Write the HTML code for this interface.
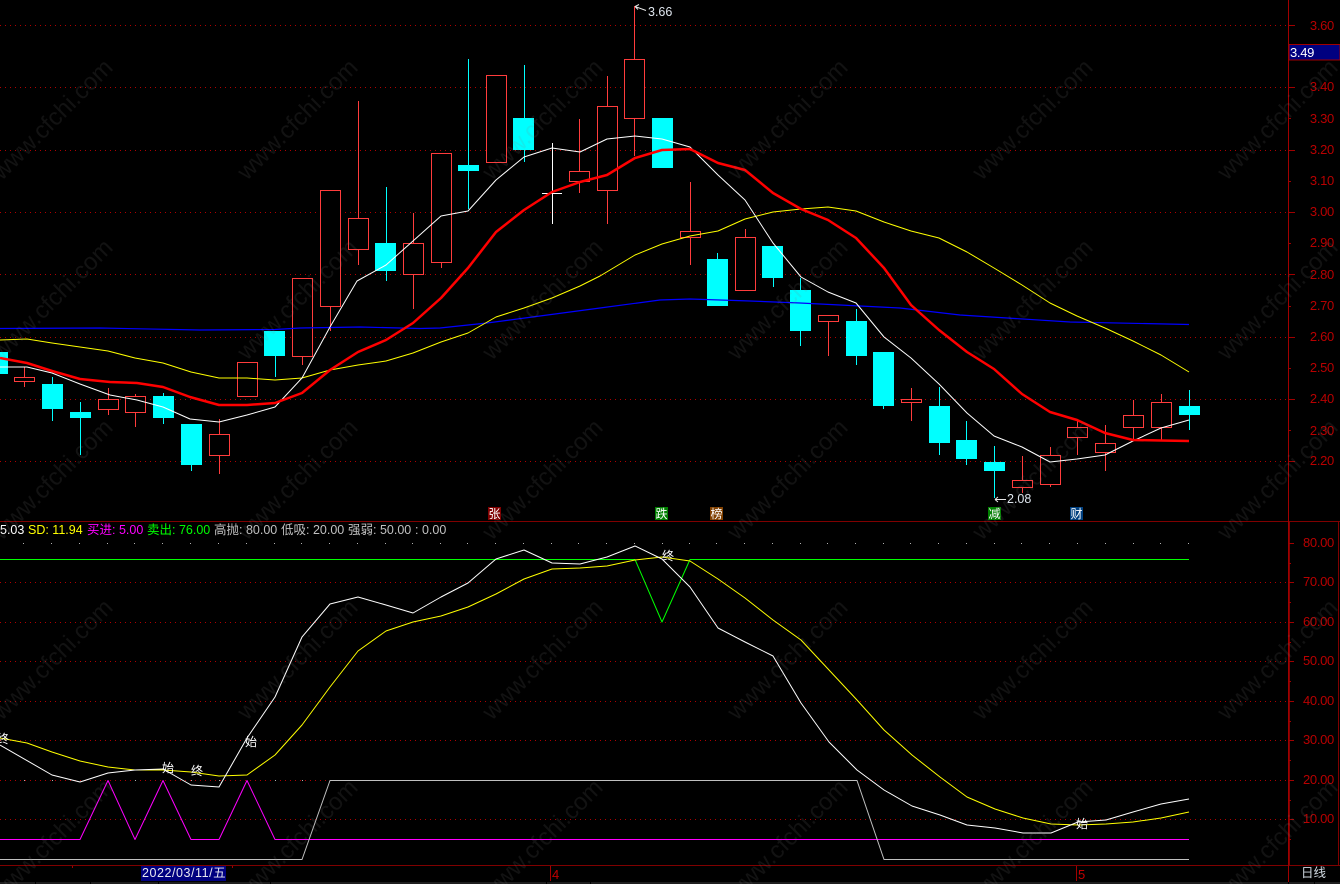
<!DOCTYPE html>
<html><head><meta charset="utf-8"><title>K线</title>
<style>
html,body{margin:0;padding:0;background:#000;width:1340px;height:884px;overflow:hidden}
svg{display:block;position:absolute;left:0;top:0}
text{font-family:"Liberation Sans","Noto Sans CJK SC",sans-serif}
.ax{font-size:13px;fill:#b80000;text-anchor:end;letter-spacing:-.3px}
.h{font-size:12.5px}
.mk{font-size:12px;fill:#fff;text-anchor:middle}
.an{font-size:12.5px;fill:#dfe6ee}
.wm{font-size:24px;fill:#808080;fill-opacity:.14;text-anchor:middle}
.c{shape-rendering:crispEdges}
</style></head><body>
<svg width="1340" height="884" viewBox="0 0 1340 884" xmlns="http://www.w3.org/2000/svg">
<rect width="1340" height="884" fill="#000"/>
<!-- grid -->
<path class="c" fill="none" stroke="#b00000" stroke-dasharray="1 4" d="M0 25.5H1288M0 87.5H1288M0 150.5H1288M0 212.5H1288M0 274.5H1288M0 337.5H1288M0 399.5H1288M0 461.5H1288M0 582.5H1288M0 622.5H1288M0 661.5H1288M0 701.5H1288M0 740.5H1288M0 780.5H1288M0 819.5H1288"/>
<path class="c" fill="none" stroke="#b0b0b0" d="M23 543.5h1M51 543.5h1M79 543.5h1M107 543.5h1M134 543.5h1M162 543.5h1M190 543.5h1M218 543.5h1M246 543.5h1M274 543.5h1M301 543.5h1M329 543.5h1M357 543.5h1M385 543.5h1M412 543.5h1M440 543.5h1M467 543.5h1M495 543.5h1M523 543.5h1M551 543.5h1M578 543.5h1M606 543.5h1M634 543.5h1M662 543.5h1M689 543.5h1M716 543.5h1M744 543.5h1M772 543.5h1M800 543.5h1M827 543.5h1M855 543.5h1M883 543.5h1M910 543.5h1M938 543.5h1M966 543.5h1M994 543.5h1M1021 543.5h1M1049 543.5h1M1077 543.5h1M1105 543.5h1M1133 543.5h1M1160 543.5h1M1188 543.5h1M24 780.5h1M52 780.5h1M135 780.5h1M191 780.5h1M219 780.5h1M275 780.5h1M302 780.5h1"/>

<!-- wicks -->
<path class="c" fill="none" stroke="#00ffff" d="M-3 345V380M52.5 377V421M80.5 402V455M163.5 393V424M191.5 424V471M275.5 331V377M386.5 187V281M468.5 59V209M524.5 65V162M717.5 253V306M773.5 246V287M800.5 278V346M856.5 309V365M883.5 352V409M939.5 387V455M966.5 421V465M994.5 446V498M1189.5 390V430"/>
<path class="c" fill="none" stroke="#ff3c3c" d="M24.5 367V387M108.5 388V415M135.5 394V427M219.5 419V474M302.5 278V365M330.5 190V331M358.5 101V265M413.5 213V309M441.5 153V268M579.5 119V193M607.5 76V224M634.5 6V156M690.5 182V265M745.5 229V290M828.5 316V356M911.5 388V421M1022.5 456V493M1050.5 447V487M1077.5 419V455M1105.5 425V471M1133.5 400V440M1161.5 394V440"/>
<path class="c" fill="none" stroke="#fff" d="M552.5 143V224M542 193.5H562"/>

<!-- cyan bodies -->
<g class="c" fill="#00ffff">
<rect x="-13" y="352" width="21" height="22"/>
<rect x="42" y="384" width="21" height="25"/>
<rect x="70" y="412" width="21" height="6"/>
<rect x="153" y="396" width="21" height="22"/>
<rect x="181" y="424" width="21" height="41"/>
<rect x="264" y="331" width="21" height="25"/>
<rect x="375" y="243" width="21" height="28"/>
<rect x="458" y="165" width="21" height="6"/>
<rect x="513" y="118" width="21" height="32"/>
<rect x="652" y="118" width="21" height="50"/>
<rect x="707" y="259" width="21" height="47"/>
<rect x="762" y="246" width="21" height="32"/>
<rect x="790" y="290" width="21" height="41"/>
<rect x="846" y="321" width="21" height="35"/>
<rect x="873" y="352" width="21" height="54"/>
<rect x="929" y="406" width="21" height="37"/>
<rect x="956" y="440" width="21" height="19"/>
<rect x="984" y="462" width="21" height="9"/>
<rect x="1179" y="406" width="21" height="9"/>
</g>
<!-- red bodies -->
<g class="c" fill="#000" stroke="#ff3c3c">
<rect x="14.5" y="377.5" width="20" height="4"/>
<rect x="98.5" y="399.5" width="20" height="10"/>
<rect x="125.5" y="396.5" width="20" height="16"/>
<rect x="209.5" y="434.5" width="20" height="21"/>
<rect x="237.5" y="362.5" width="20" height="34"/>
<rect x="292.5" y="278.5" width="20" height="78"/>
<rect x="320.5" y="190.5" width="20" height="116"/>
<rect x="348.5" y="218.5" width="20" height="31"/>
<rect x="403.5" y="243.5" width="20" height="31"/>
<rect x="431.5" y="153.5" width="20" height="109"/>
<rect x="486.5" y="75.5" width="20" height="87"/>
<rect x="569.5" y="171.5" width="20" height="10"/>
<rect x="597.5" y="106.5" width="20" height="84"/>
<rect x="624.5" y="59.5" width="20" height="59"/>
<rect x="680.5" y="231.5" width="20" height="6"/>
<rect x="735.5" y="237.5" width="20" height="53"/>
<rect x="818.5" y="315.5" width="20" height="6"/>
<rect x="901.5" y="399.5" width="20" height="3"/>
<rect x="1012.5" y="480.5" width="20" height="7"/>
<rect x="1040.5" y="455.5" width="20" height="29"/>
<rect x="1067.5" y="427.5" width="20" height="10"/>
<rect x="1095.5" y="443.5" width="20" height="9"/>
<rect x="1123.5" y="415.5" width="20" height="12"/>
<rect x="1151.5" y="402.5" width="20" height="25"/>
</g>

<!-- MA lines -->
<g fill="none" stroke-linejoin="round">
<polyline stroke="#0000ff" stroke-width="1.2" points="0,328.5 100,328 200,330 275,329.5 300,328 360,327 420,328.5 440,328 487,323 540,316 600,308 660,300 690,299 750,301 800,303 860,306 900,308 960,315 1070,322 1189,324.5"/>
<polyline stroke="#ffff00" stroke-width="1" points="0,340 27,339 52,343 80,347 108,351 135,358 163,363 191,372 219,378 247,378 275,380 302,378 330,370 358,365 386,361 413,353 441,342 468,333 496,317 524,308 552,298 580,286 600,276 635,255 662,244 690,236 718,231 745,219 773,212 801,209 828,207 856,211 884,222 911,231 939,238 967,252 994,268 1022,285 1050,303 1077,316 1105,328 1133,341 1161,355 1189,372"/>
<polyline stroke="#ffffff" stroke-width="1" points="0,367 27,367 52,373 80,384 110,395 137,400 163,407 190,419 219,422 247,415 275,407 302,378 330,327 357,281 386,265 413,241 441,216 468,211 496,180 524,157 552,148 580,152 607,139 635,136 662,139 690,147 718,175 745,200 773,243 801,277 828,292 856,303 884,337 911,358 939,384 967,413 994,436 1022,447 1050,462 1077,459 1105,455 1133,441 1161,428 1189,420"/>
<polyline stroke="#ff0000" stroke-width="2.5" points="0,358 27,363 52,371 80,379 110,382 137,383 163,387 190,397 219,405 247,405 275,403 302,393 330,370 358,352 386,340 413,323 441,298 468,268 496,232 524,210 552,192 580,182 607,175 635,158 662,150 690,149 718,163 745,170 773,193 801,209 828,220 856,238 884,268 911,305 939,330 967,352 994,369 1022,394 1050,412 1077,420 1105,433 1133,440 1161,440.5 1189,441"/>
</g>

<!-- lower indicators -->
<g fill="none" stroke-width="1" stroke-linejoin="round">
<polyline stroke="#00ff00" points="0,559.5 635,559.5 662,622 690,559.5 1189,559.5"/>
<polyline stroke="#ff00ff" points="0,839.5 80,839.5 108,780.5 135,839.5 163,780.5 191,839.5 219,839.5 247,780.5 275,839.5 1189,839.5"/>
<polyline stroke="#c0c0c0" points="0,859.5 302,859.5 330,780.5 857,780.5 884,859.5 1189,859.5"/>
<polyline stroke="#ffff00" points="0,738 27,743 52,752 80,761 108,767 135,770 163,770 191,772 219,776 247,775 275,755 302,725 330,687 358,651 386,631 413,622 441,616 468,607 496,594 524,579 552,569 580,568 607,566 635,560 662,557 690,561 718,579 745,598 773,620 801,640 829,670 857,700 884,730 912,755 940,777 967,797 995,809 1023,818 1051,824 1078,825 1106,824 1133,822 1161,818 1189,812"/>
<polyline stroke="#ffffff" points="0,745 52,775 80,782 108,773 135,770 163,769 191,785 219,787 247,738 275,697 302,637 330,604 358,597 386,605 413,613 441,597 468,583 496,559 524,550 552,563 580,564 607,557 635,546 662,559 690,587 718,628 745,642 773,656 801,703 829,742 857,770 884,790 912,806 940,815 967,825 995,828 1023,833 1051,833 1078,822 1106,820 1133,812 1161,804 1189,799"/>
</g>

<!-- axis frames -->
<g class="c" fill="none" stroke="#800000">
<path d="M0 521.5H1340M0 865.5H1340"/>
<path d="M1288.5 0V884" stroke="#a00000"/>
<path d="M1289.5 521V865M1338.5 521V865"/>
<path stroke="#a00000" d="M1288 25.5h7M1288 87.5h7M1288 150.5h7M1288 212.5h7M1288 274.5h7M1288 337.5h7M1288 399.5h7M1288 461.5h7M1288 118.5h3M1288 181.5h3M1288 243.5h3M1288 306.5h3M1288 368.5h3M1288 430.5h3M1288 543.5h6M1288 582.5h6M1288 622.5h6M1288 661.5h6M1288 701.5h6M1288 740.5h6M1288 780.5h6M1288 819.5h6M1288 563.5h3M1288 602.5h3M1288 642.5h3M1288 681.5h3M1288 721.5h3M1288 760.5h3M1288 800.5h3M1288 839.5h3"/>
<path stroke="#a00000" d="M72.5 866v2M232.5 866v2M550.5 866v15M1076.5 866v15"/>
</g>

<!-- right axis labels -->
<g>
<text class="ax" x="1334" y="30">3.60</text>
<text class="ax" x="1334" y="91">3.40</text>
<text class="ax" x="1334" y="123">3.30</text>
<text class="ax" x="1334" y="154">3.20</text>
<text class="ax" x="1334" y="185">3.10</text>
<text class="ax" x="1334" y="216">3.00</text>
<text class="ax" x="1334" y="247">2.90</text>
<text class="ax" x="1334" y="279">2.80</text>
<text class="ax" x="1334" y="310">2.70</text>
<text class="ax" x="1334" y="341">2.60</text>
<text class="ax" x="1334" y="372">2.50</text>
<text class="ax" x="1334" y="403">2.40</text>
<text class="ax" x="1334" y="435">2.30</text>
<text class="ax" x="1334" y="465">2.20</text>
<text class="ax" x="1334" y="547">80.00</text>
<text class="ax" x="1334" y="586">70.00</text>
<text class="ax" x="1334" y="626">60.00</text>
<text class="ax" x="1334" y="665">50.00</text>
<text class="ax" x="1334" y="705">40.00</text>
<text class="ax" x="1334" y="744">30.00</text>
<text class="ax" x="1334" y="784">20.00</text>
<text class="ax" x="1334" y="823">10.00</text>
</g>
<rect class="c" x="1289" y="44.5" width="51" height="15.5" fill="#000080" stroke="#a00000"/>
<text x="1290" y="57" font-size="13" fill="#fff" letter-spacing="-.3">3.49</text>

<!-- header -->
<g class="h">
<text x="0" y="534" fill="#fff">5.03</text>
<text x="28" y="534" fill="#ffff00">SD: 11.94</text>
<text x="87" y="534" fill="#ff00ff">买进: 5.00</text>
<text x="147" y="534" fill="#00ff00">卖出: 76.00</text>
<text x="214" y="534" fill="#c0c0c0">高抛: 80.00</text>
<text x="281" y="534" fill="#c0c0c0">低吸: 20.00</text>
<text x="348" y="534" fill="#c0c0c0">强弱: 50.00</text>
<text x="415" y="534" fill="#c0c0c0">: 0.00</text>
</g>

<!-- markers -->
<g class="c">
<rect x="488" y="507" width="13" height="13" fill="#800000"/>
<rect x="655" y="507" width="13" height="13" fill="#008000"/>
<rect x="710" y="507" width="13" height="13" fill="#804000"/>
<rect x="988" y="507" width="13" height="13" fill="#008000"/>
<rect x="1070" y="507" width="13" height="13" fill="#004080"/>
</g>
<text class="mk" x="494.5" y="518">张</text>
<text class="mk" x="661.5" y="518">跌</text>
<text class="mk" x="716.5" y="518">榜</text>
<text class="mk" x="994.5" y="518">减</text>
<text class="mk" x="1076.5" y="518">财</text>

<!-- annotations -->
<path fill="none" stroke="#e8e8e8" d="M635 6.5L646 10.5M635 6.5L639 4.5M635 6.5L638 9.5M995 499.5H1006M995 499.5L998 497M995 499.5L998 502"/>
<text class="an" x="648" y="16">3.66</text>
<text class="an" x="1007" y="503">2.08</text>

<text class="mk" x="3" y="743">终</text>
<text class="mk" x="168" y="772">始</text>
<text class="mk" x="197" y="775">终</text>
<text class="mk" x="251" y="746">始</text>
<text class="mk" x="668" y="560">终</text>
<text class="mk" x="1082" y="828">始</text>

<!-- bottom -->
<rect class="c" x="141" y="866" width="85" height="15" fill="#000080"/>
<text x="142" y="877" font-size="12.5" fill="#e8e8f0" letter-spacing=".55">2022/03/11/五</text>
<text x="552" y="879" font-size="13" fill="#c00000">4</text>
<text x="1078" y="879" font-size="13" fill="#c00000">5</text>
<text x="1301" y="877" font-size="12.5" fill="#d0d8e0">日线</text>
<rect class="c" x="0" y="882" width="1340" height="2" fill="#1e1e1e"/>
<path class="c" stroke="#000" d="M35.5 882v2M90.5 882v2M158.5 882v2M270.5 882v2M546.5 882v2M590.5 882v2M1288.5 882v2M1314.5 882v2"/>

<!-- watermarks -->
<g class="wm">
<text transform="translate(58,125) rotate(-45)">www.cfchi.com</text>
<text transform="translate(303,125) rotate(-45)">www.cfchi.com</text>
<text transform="translate(548,125) rotate(-45)">www.cfchi.com</text>
<text transform="translate(793,125) rotate(-45)">www.cfchi.com</text>
<text transform="translate(1038,125) rotate(-45)">www.cfchi.com</text>
<text transform="translate(1283,125) rotate(-45)">www.cfchi.com</text>
<text transform="translate(58,305) rotate(-45)">www.cfchi.com</text>
<text transform="translate(303,305) rotate(-45)">www.cfchi.com</text>
<text transform="translate(548,305) rotate(-45)">www.cfchi.com</text>
<text transform="translate(793,305) rotate(-45)">www.cfchi.com</text>
<text transform="translate(1038,305) rotate(-45)">www.cfchi.com</text>
<text transform="translate(1283,305) rotate(-45)">www.cfchi.com</text>
<text transform="translate(58,485) rotate(-45)">www.cfchi.com</text>
<text transform="translate(303,485) rotate(-45)">www.cfchi.com</text>
<text transform="translate(548,485) rotate(-45)">www.cfchi.com</text>
<text transform="translate(793,485) rotate(-45)">www.cfchi.com</text>
<text transform="translate(1038,485) rotate(-45)">www.cfchi.com</text>
<text transform="translate(1283,485) rotate(-45)">www.cfchi.com</text>
<text transform="translate(58,665) rotate(-45)">www.cfchi.com</text>
<text transform="translate(303,665) rotate(-45)">www.cfchi.com</text>
<text transform="translate(548,665) rotate(-45)">www.cfchi.com</text>
<text transform="translate(793,665) rotate(-45)">www.cfchi.com</text>
<text transform="translate(1038,665) rotate(-45)">www.cfchi.com</text>
<text transform="translate(1283,665) rotate(-45)">www.cfchi.com</text>
<text transform="translate(58,845) rotate(-45)">www.cfchi.com</text>
<text transform="translate(303,845) rotate(-45)">www.cfchi.com</text>
<text transform="translate(548,845) rotate(-45)">www.cfchi.com</text>
<text transform="translate(793,845) rotate(-45)">www.cfchi.com</text>
<text transform="translate(1038,845) rotate(-45)">www.cfchi.com</text>
<text transform="translate(1283,845) rotate(-45)">www.cfchi.com</text>
</g>
</svg>
</body></html>
